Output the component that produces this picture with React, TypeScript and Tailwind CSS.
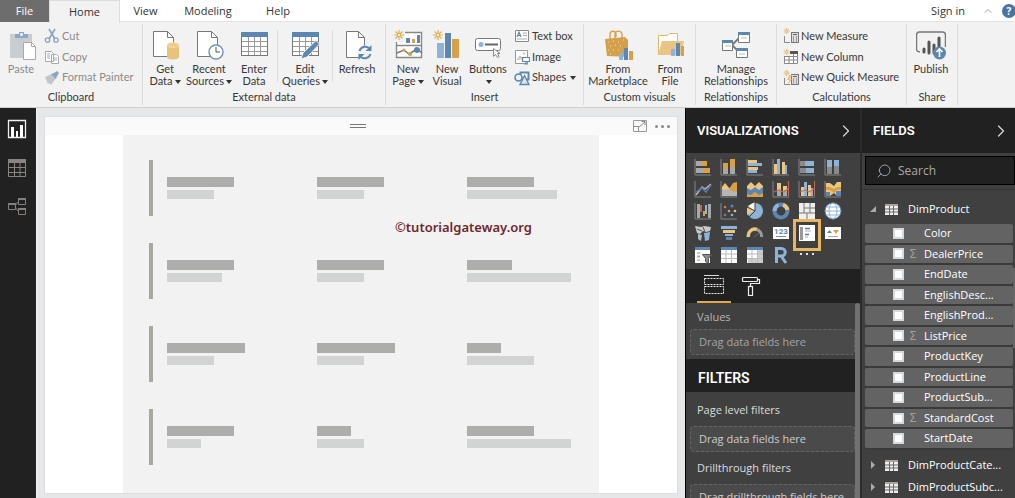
import type { ReactNode } from 'react';
import { ChevronRight, ChevronUp, Search } from 'lucide-react';

const BLUE = '#5b87b2';
const SKY = '#8db4d8';
const GOLD = '#d9a047';
const SAND = '#ecc681';
const GRAY = '#a8a8a8';

type IconProps = { children: ReactNode; size?: string; box?: string };

function Icon({ children, size = 'size-[30px]', box = '0 0 30 30' }: IconProps) {
  return (
    <svg viewBox={box} className={`${size} shrink-0`} fill="none" aria-hidden="true">
      {children}
    </svg>
  );
}

function Small({ children }: { children: ReactNode }) {
  return (
    <Icon size="size-4" box="0 0 16 16">
      {children}
    </Icon>
  );
}

const sheet = (
  <>
    <path d="M5.500 2.500h14l6 6v19h-20z" transform="translate(-2 -1)" fill="#fff" stroke="#777" />
    <path d="M17.500 1.500v6h6" stroke="#777" />
  </>
);

const gridSheet = (
  <>
    <rect x="2.500" y="2.500" width="26" height="23" fill="#fff" stroke="#777" />
    <rect x="2" y="2" width="27" height="5" fill={BLUE} />
    <path d="M3 11.500h25M3 16.500h25M3 21.500h25M9.500 7v18M15.500 7v18M21.500 7v18" stroke="#999" />
  </>
);

const sun = (
  <>
    <path d="M5 0v10M0 5h10M1.500 1.500l7 7M8.500 1.500l-7 7" stroke="#e5ad4c" strokeWidth="1.200" />
    <circle cx="5" cy="5" r="1.800" fill="#fbf3e0" stroke="#e5ad4c" />
  </>
);

const pasteIcon = (
  <Icon>
    <path d="M4 4h22v24H4z" fill="#c9ccd0" />
    <path d="M9 8V4h4V2h5v2h4v4z" fill="#8aa9c8" />
    <circle cx="15.500" cy="4.500" r="1.500" fill="#fff" />
    <path d="M17.500 12.500h8l4 4v13h-12z" fill="#fff" stroke="#aaa" />
    <path d="M25.500 12.500v4h4" stroke="#aaa" />
  </Icon>
);

const getDataIcon = (
  <Icon>
    {sheet}
    <path d="M17 15v12c0 1.500 2.500 2.500 6 2.500s6-1 6-2.500V15z" fill="#e9c27c" />
    <ellipse cx="23" cy="15" rx="6" ry="2.500" fill="#efcb8b" stroke="#f6e3bf" strokeWidth=".7" />
  </Icon>
);

const recentIcon = (
  <Icon>
    {sheet}
    <circle cx="22" cy="22" r="7" fill="#fff" stroke="#7192b0" strokeWidth="1.400" />
    <path d="M22 17v5h4" stroke="#555" />
  </Icon>
);

const editIcon = (
  <Icon>
    {gridSheet}
    <path d="M11 29l2-6L26 10.500l3.500 3.500L17 27z" fill={BLUE} stroke="#f2f2f2" />
  </Icon>
);

const refreshIcon = (
  <Icon>
    <path d="M4.500 1.500h12l6 6v20h-18z" fill="#fff" stroke="#777" />
    <path d="M16.500 1.500v6h6" stroke="#777" />
    <circle cx="23" cy="22.500" r="7" fill="#f2f2f2" />
    <path d="M17.500 21a6 6 0 0 1 10.500-2M28.500 24A6 6 0 0 1 18 26" stroke={BLUE} strokeWidth="2" />
    <path d="M29.500 15v6h-6zM16.500 30v-6h6z" fill={BLUE} />
  </Icon>
);

const newPageIcon = (
  <Icon>
    <path d="M3.500 2.500h25v25h-25zM3.500 15.500h25" fill="#fff" stroke="#888" strokeWidth="1.400" />
    <path d="M13 8h4v5h-4zM24 5h3v8h-3z" fill={BLUE} />
    <path d="M19 9h3v4h-3z" fill={GOLD} />
    <path d="M4 23l7-3 5 4 8-5 5 4" stroke="#777" strokeWidth="1.500" />
    <circle cx="24" cy="20" r="3" fill={BLUE} />
    <circle cx="17" cy="24" r="2" fill={GOLD} />
    <circle cx="11" cy="20" r="1.500" fill={GOLD} />
    <path d="M1 1h11v11H1z" fill="#f2f2f2" />
    <g transform="translate(1 0)">{sun}</g>
  </Icon>
);

const newVisualIcon = (
  <Icon>
    <path d="M5 13h7v15H5z" fill={SKY} />
    <path d="M13 3h6v25h-6z" fill={BLUE} />
    <path d="M20 9h7v19h-7z" fill={GOLD} />
    <g transform="translate(1 0)">{sun}</g>
  </Icon>
);

const buttonsIcon = (
  <Icon>
    <rect x="2.500" y="8.500" width="25" height="12" rx="2" fill="#fff" stroke="#777" />
    <circle cx="8" cy="14.500" r="2.500" fill={SKY} />
    <path d="M12 14.500h13" stroke="#666" strokeWidth="2" />
    <path d="M20.500 18.500v8l2-2 2 3 1.500-1-1.500-3h2.500z" fill="#fff" stroke="#888" />
  </Icon>
);

const marketIcon = (
  <Icon>
    <path d="M7 9V5c0-5 6-5 6 0v2M12 8V4c1-4 7-4 7 1v3" stroke={GOLD} strokeWidth="1.400" />
    <path d="M2 9l20-2 3 3v17L4 26z" fill="#d4a04b" />
    <path d="M5 12h1m4-1h1m4 1h1m4-2h1M7 16h1m4-1h1m4 1h1M5 20h1m4 0h1m4 0h1M7 24h1" stroke="#f5dfb1" />
    <path d="M16 23h4v7h-4z" fill={SKY} />
    <path d="M21 18h4v12h-4z" fill={BLUE} />
    <path d="M26 21h4v9h-4z" fill={GOLD} />
  </Icon>
);

const fileIcon = (
  <Icon>
    <path d="M3.500 25V5.500h9l2-2h8v8" fill="#fff" stroke="#e3b76a" />
    <path d="M3 25l4-14h22l-3 14z" fill="#e8c487" />
    <path d="M16 19h4v7h-4z" fill={SKY} />
    <path d="M21 13h4v13h-4z" fill={BLUE} />
    <path d="M26 16h3v10h-3z" fill={GOLD} />
  </Icon>
);

const manageIcon = (
  <Icon>
    <path d="M11 15l8-8M11 15l8 8" stroke="#777" strokeWidth="1.800" />
    <path d="M1.500 10.500h10v10h-10zM17.500 2.500h11v10h-11zM15.500 18.500h11v9h-11z" fill="#fff" stroke="#777" />
    <path d="M1 10h11v3H1zM17 2h12v3H17zM15 18h12v3H15z" fill={BLUE} />
    <path d="M4 16h6M20 8h6M18 24h6" stroke="#bbb" />
  </Icon>
);

const publishIcon = (
  <Icon>
    <path d="M4 22c-2 0-3.500-1-3.500-3V5c0-2 1-3 3-3h23c2 0 3 1 3 3v12" stroke="#777" strokeWidth="1.500" />
    <path d="M8 19v3M13 12v11M18 15v8M23 8v9" stroke="#555" strokeWidth="3" strokeLinecap="round" />
    <circle cx="23.500" cy="23" r="6.500" fill={BLUE} />
    <path d="M23.500 27v-8M20.500 22l3-3 3 3" stroke="#fff" strokeWidth="1.600" />
  </Icon>
);

const cutIcon = (
  <Small>
    <path d="M5 1l6 10M11 1L5 11" stroke="#8fa9c2" strokeWidth="1.800" />
    <circle cx="3.500" cy="12" r="2.200" stroke="#8aa4be" strokeWidth="1.300" />
    <circle cx="12" cy="12" r="2.200" stroke="#8aa4be" strokeWidth="1.300" />
  </Small>
);

const copyIcon = (
  <Small>
    <path d="M1.500 2.500h6l2 2v8h-8zM7.500 5.500h5l2 2v7h-7z" fill="#fff" stroke="#aaa" />
    <path d="M3 5h3M3 7h3M3 9h3M9 9h4M9 11h4" stroke="#9ab0c5" />
  </Small>
);

const painterIcon = (
  <Small>
    <path d="M1 7l7-3 4 4-5 7-2-2-1 1z" fill="#c3c6ca" />
    <path d="M7 4l3-1 3-2 2 2-2 3-1 3z" fill="#86a6c6" />
  </Small>
);

const textBoxIcon = (
  <Small>
    <path d="M1.500 2.500h13v11h-13z" fill="#fff" stroke="#888" />
    <path d="M3 9l2-5 2 5M4 7.500h2" stroke={BLUE} strokeWidth="1.200" />
    <path d="M9 5h4M9 7.500h4M3 11h10" stroke="#aaa" />
  </Small>
);

const imageIcon = (
  <Small>
    <path d="M1.500 1.500h12v13h-12z" fill="#fff" stroke="#999" />
    <circle cx="10" cy="4.500" r="1.200" fill={SAND} />
    <path d="M3 11l3-4 3 3" fill="#ccc" stroke="#bbb" />
    <path d="M8.500 8.500h7v4h-7zM10 15h4M12 12v3" fill="#fff" stroke={BLUE} strokeWidth="1.200" />
  </Small>
);

const shapesIcon = (
  <Small>
    <path d="M6.500 2.500h8v7h-8z" fill="#fff" stroke={BLUE} strokeWidth="2" />
    <circle cx="4.500" cy="7.500" r="3.500" fill="#f2f2f2" stroke={BLUE} strokeWidth="1.600" />
    <path d="M10.500 5.500l4.500 9H6z" fill="#dbe6f0" stroke={BLUE} strokeWidth="1.400" />
  </Small>
);

const calculator = (
  <>
    <rect x="8.500" y="4.500" width="7" height="10" fill="#ddd" stroke="#777" />
    <path d="M10 6.500h4M10 9h1m2 0h1M10 11h1m2 0h1M10 13h1m2 0h1" stroke="#666" />
    <path d="M1.500 8v6.500H7" stroke="#888" />
  </>
);

const measureIcon = (
  <Small>
    {calculator}
    <g transform="scale(.6) translate(1 0)">{sun}</g>
  </Small>
);

const columnIcon = (
  <Small>
    <path d="M1.500 3.500h13v11h-13zM1.500 7.500h13M1.500 11h13M6 4v10M10.500 4v10" fill="#fff" stroke="#888" />
    <path d="M7 2h8v3H7z" fill="#555" />
    <path d="M0 0h7v7H0z" fill="#f2f2f2" />
    <g transform="scale(.6) translate(1 0)">{sun}</g>
  </Small>
);

const quickIcon = (
  <Small>
    {calculator}
    <g transform="scale(.6) translate(1 0)">{sun}</g>
    <path d="M6 5h3l-2 4h2l-4 6 1-5H4z" fill={SAND} />
  </Small>
);

const axis = <path d="M1 1v16h16" stroke="#858585" />;

const visuals: { name: string; art: ReactNode }[] = [
  { name: 'Stacked bar chart', art: <>{axis}<path d="M2 3h5v5H2zM2 10h7v5H2z" fill={GRAY} /><path d="M7 3h6v5H7zM9 10h7v5H9z" fill={GOLD} /></> },
  { name: 'Stacked column chart', art: <>{axis}<path d="M3 10h5v6H3zM10 8h5v8h-5z" fill={GRAY} /><path d="M3 5h5v6H3zM10 1h5v8h-5z" fill={GOLD} /></> },
  { name: 'Clustered bar chart', art: <>{axis}<path d="M2 2h9v3H2zM2 9h10v3H2z" fill={SAND} /><path d="M2 5h14v3H2zM2 12h9v3H2z" fill={SKY} /></> },
  { name: 'Clustered column chart', art: <>{axis}<path d="M2 6h3v10H2zM10 4h3v12h-3z" fill={SAND} /><path d="M5 1h3v15H5zM13 7h2v9h-2z" fill={SKY} /></> },
  { name: '100% stacked bar chart', art: <>{axis}<path d="M2 3h5v5H2zM2 10h6v5H2z" fill="#8a8a8a" /><path d="M7 3h9v5H7zM8 10h8v5H8z" fill={SKY} /></> },
  { name: '100% stacked column chart', art: <>{axis}<path d="M3 8h5v8H3zM10 7h5v9h-5z" fill="#8a8a8a" /><path d="M3 2h5v7H3zM10 2h5v6h-5z" fill={SKY} /></> },
  { name: 'Line chart', art: <>{axis}<path d="M2 15l6-8 3 2 6-5" stroke="#b5b5b5" strokeWidth="1.500" /><path d="M2 12l6-4 4 4 5-7" stroke="#5a78a8" strokeWidth="1.500" /></> },
  { name: 'Area chart', art: <>{axis}<path d="M2 8l3-3 4 4 4-6 4-1v14H2z" fill={GOLD} /><path d="M2 9l3-4 8 7 4-1v5H2z" fill="#b5b5b5" /><path d="M2 7l3-4 5 6-8 1z" fill={SAND} /></> },
  { name: 'Stacked area chart', art: <><path d="M1 6l4-4 4 4 4-4 4 4v11H1z" fill={SAND} /><path d="M1 8l4 2 4-3 4 3 4-3v10H1z" fill={BLUE} /><path d="M1 14l4 1 4-3 4 3 4-2v4H1z" fill={GOLD} /></> },
  { name: 'Line and stacked column chart', art: <>{axis}<path d="M5 3h4v13H5zM11 6h4v10h-4z" fill={SAND} /><path d="M5 11h4v5H5zM11 11h4v5h-4z" fill={GRAY} /><path d="M2 12l5-2 4 2 5-3M16.500 1v15" stroke="#b96a58" strokeWidth="1.200" /></> },
  { name: 'Line and clustered column chart', art: <>{axis}<path d="M3 7h3v9H3zM10 5h3v11h-3z" fill={SAND} /><path d="M6 2h3v14H6zM13 8h2v8h-2z" fill={SKY} /><path d="M2 12l5-2 4 2 5-3M16.500 1v15" stroke="#b96a58" /></> },
  { name: 'Ribbon chart', art: <>{axis}<path d="M2 3h4l4 3 3-4h4v14h-4l-3-3-4 3H2z" fill={SAND} /><path d="M2 7h4l4 2 3-2h4v3h-4l-3 3-4-3H2z" fill={GOLD} /><path d="M2 12h4v4H2zM12 11h5v5h-5z" fill={BLUE} /></> },
  { name: 'Waterfall chart', art: <>{axis}<path d="M3 2h3v14H3zM14 2h3v14h-3z" fill={GRAY} /><path d="M6 3h2v7H6z" fill="#b96a58" /><path d="M11 3h2v9h-2z" fill={SKY} /><path d="M9 9h2v5H9z" fill={GOLD} /></> },
  { name: 'Scatter chart', art: <>{axis}<circle cx="5" cy="5" r="1.300" fill="#cf7260" /><circle cx="12" cy="4" r="1.500" fill={BLUE} /><circle cx="9" cy="9" r="1.300" fill={GOLD} /><circle cx="15" cy="9" r="1.300" fill={SAND} /><circle cx="5" cy="13" r="1.300" fill={BLUE} /><circle cx="12" cy="13" r="1.300" fill={SKY} /></> },
  { name: 'Pie chart', art: <><circle cx="9" cy="9" r="8" fill={SKY} /><path d="M9 9V0L2 4z" fill="#fff3dc" /><path d="M8 9L1 5v8z" fill={SAND} /><path d="M9 0v9l-6 6M9 9L1 5" stroke="#414141" /></> },
  { name: 'Donut chart', art: <><circle cx="9" cy="9" r="6.500" stroke={BLUE} strokeWidth="4" /><path d="M11 2.800a6.500 6.500 0 0 1 4.500 5" stroke={SAND} strokeWidth="4" /><path d="M2.500 9a6.500 6.500 0 0 1 4-6" stroke={SKY} strokeWidth="4" /></> },
  { name: 'Treemap', art: <><path d="M1 1h16v16H1z" fill="#eee" /><path d="M1 11h16M6 1v10M6 6h11M12 1v10M9 11v6" stroke="#777" /></> },
  { name: 'Map', art: <><circle cx="9" cy="9" r="8" fill="#fff" stroke={BLUE} /><ellipse cx="9" cy="9" rx="4" ry="8" stroke={SKY} /><path d="M1 9h16M2 5h14M2 13h14" stroke={SKY} /></> },
  { name: 'Filled map', art: <><path d="M1 2l6 1 3-1 7 1-1 4-4 1-3-1-3 3-3-1z" fill="#c9c9c9" /><path d="M10 9l6-1-1 8-4 1z" fill={SKY} /><path d="M4 10l4 1-1 6-3-2z" fill="#a8bccb" /><path d="M3 5l5 2M9 3l2 5" stroke="#555" /></> },
  { name: 'Funnel', art: <><path d="M1 2h16v3H1z" fill={SKY} /><path d="M3 6h12v3H3z" fill={SAND} /><path d="M5 10h8v2H5z" fill={SKY} /><path d="M6 13h6v3H6z" fill={BLUE} /></> },
  { name: 'Gauge', art: <><path d="M2.500 13a6.500 6.500 0 0 1 8.500-7.500" stroke={SAND} strokeWidth="3.500" /><path d="M11 5.500a7 7 0 0 1 4.500 7.500" stroke="#9a9a9a" strokeWidth="3" /><path d="M8 13l5-4" stroke="#666" /></> },
  { name: 'Card', art: <><path d="M1 3h16v12H1z" fill="#fff" /><text x="9" y="10" textAnchor="middle" fill={BLUE} className="font-['Roboto'] text-[8px] font-bold">123</text><path d="M4 12.500h10" stroke="#888" /></> },
  { name: 'Multi-row card', art: <><path d="M1 1h16v16H1z" fill="#fff" /><path d="M2 3h3v13H2z" fill="#999" /><path d="M7 4.500h5M7 10.500h4" stroke="#777" strokeWidth="1.500" /><path d="M7 7h6M7 13h3" stroke={SKY} /></> },
  { name: 'KPI', art: <><path d="M1 3h16v12H1z" fill="#fff" /><path d="M3 9l2.500-3L8 9z" fill={BLUE} /><path d="M9 6h6l-3 4z" fill={GOLD} /><path d="M4 12.500h10" stroke="#aaa" /></> },
  { name: 'Slicer', art: <><path d="M1 1h15v16H1z" fill="#fff" /><path d="M1 1h15v3H1z" fill={BLUE} /><path d="M3 6h3v2H3zM3 13h3v2H3z" fill={SAND} /><path d="M3 9.500h3v2H3z" fill={SKY} /><path d="M8.500 8.500h9l-3 4v5l-3-2v-3z" fill="#8c8c8c" stroke="#555" /></> },
  { name: 'Table', art: <><path d="M1 1h16v16H1z" fill="#fff" /><path d="M1 1h16v3H1z" fill={BLUE} /><path d="M1 8h16M1 12.500h16M6 4v13M11.500 4v13" stroke="#bbb" /></> },
  { name: 'Matrix', art: <><path d="M1 1h16v16H1z" fill="#fff" /><path d="M1 1h16v3H1z" fill={BLUE} /><path d="M12 4h5v13h-5zM2 13h15v4H2z" fill="#ccc" /><path d="M1 8h16M1 12.500h16M6 4v13M11.500 4v13" stroke="#bbb" /></> },
  { name: 'R script visual', art: <path d="M4.500 17V2.500h5a3.500 3.500 0 0 1 0 7.500h-5M9 10l5 7" stroke={SKY} strokeWidth="3" /> },
  { name: 'More visuals', art: <path d="M2 8h2M8 8h2M14 8h2" stroke="#e5e5e5" strokeWidth="2" /> },
];

function Caret() {
  return <span className="ml-0.5 inline-block border-x-3 border-t-4 border-x-transparent border-t-[#333] align-middle" />;
}

type BigButtonProps = { icon: ReactNode; top: string; bottom?: string; width: string; menu?: boolean; off?: boolean };

function BigButton({ icon, top, bottom, width, menu, off }: BigButtonProps) {
  return (
    <button className={`flex shrink-0 flex-col items-center pt-1.5 ${width} ${off ? 'text-[#8a8a8a]' : ''}`}>
      {icon}
      <span className="mt-[3px] leading-3 whitespace-nowrap">
        {top}
        <br />
        {bottom}
        {menu && <Caret />}
      </span>
    </button>
  );
}

function SmallButton({ icon, label, menu, off }: { icon: ReactNode; label: string; menu?: boolean; off?: boolean }) {
  return (
    <button className={`flex flex-1 items-center gap-0.5 whitespace-nowrap ${off ? 'text-[#8a8a8a]' : ''}`}>
      {icon}
      {label}
      {menu && <Caret />}
    </button>
  );
}

function Group({ label, width, children }: { label: string; width: string; children: ReactNode }) {
  return (
    <section className={`my-0.5 flex shrink-0 flex-col border-r border-[#dcdcdc] ${width}`}>
      <div className="flex h-[68px] pl-0.5">{children}</div>
      <h2 className="text-center leading-4">{label}</h2>
    </section>
  );
}

function SmallColumn({ children }: { children: ReactNode }) {
  return <div className="mt-0.5 ml-1 flex h-[62px] flex-col">{children}</div>;
}

function Divider() {
  return <div className="mx-0.5 mt-1.5 h-[52px] w-px bg-[#dcdcdc]" />;
}

function Ribbon() {
  return (
    <div className="flex h-[86px] border-b border-[#cfcfcf] bg-[#f2f2f2] font-['Lato','Open_Sans',sans-serif] text-[#383838]">
      <Group label="Clipboard" width="w-[143px]">
        <BigButton icon={pasteIcon} top="Paste" width="w-[38px]" off />
        <SmallColumn>
          <SmallButton icon={cutIcon} label="Cut" off />
          <SmallButton icon={copyIcon} label="Copy" off />
          <SmallButton icon={painterIcon} label="Format Painter" off />
        </SmallColumn>
      </Group>
      <Group label="External data" width="w-[243px]">
        <BigButton icon={getDataIcon} top="Get" bottom="Data" width="w-[40px]" menu />
        <BigButton icon={recentIcon} top="Recent" bottom="Sources" width="w-[48px]" menu />
        <BigButton icon={<Icon>{gridSheet}</Icon>} top="Enter" bottom="Data" width="w-[42px]" />
        <Divider />
        <BigButton icon={editIcon} top="Edit" bottom="Queries" width="w-[50px]" menu />
        <Divider />
        <BigButton icon={refreshIcon} top="Refresh" width="w-[44px]" />
      </Group>
      <Group label="Insert" width="w-[198px]">
        <BigButton icon={newPageIcon} top="New" bottom="Page" width="w-[40px]" menu />
        <BigButton icon={newVisualIcon} top="New" bottom="Visual" width="w-[38px]" />
        <BigButton icon={buttonsIcon} top="Buttons" width="w-[44px]" menu />
        <SmallColumn>
          <SmallButton icon={textBoxIcon} label="Text box" />
          <SmallButton icon={imageIcon} label="Image" />
          <SmallButton icon={shapesIcon} label="Shapes" menu />
        </SmallColumn>
      </Group>
      <Group label="Custom visuals" width="w-[112px]">
        <BigButton icon={marketIcon} top="From" bottom="Marketplace" width="w-[64px]" />
        <BigButton icon={fileIcon} top="From" bottom="File" width="w-[40px]" />
      </Group>
      <Group label="Relationships" width="w-[81px]">
        <BigButton icon={manageIcon} top="Manage" bottom="Relationships" width="w-[76px]" />
      </Group>
      <Group label="Calculations" width="w-[130px]">
        <SmallColumn>
          <SmallButton icon={measureIcon} label="New Measure" />
          <SmallButton icon={columnIcon} label="New Column" />
          <SmallButton icon={quickIcon} label="New Quick Measure" />
        </SmallColumn>
      </Group>
      <Group label="Share" width="w-[51px]">
        <BigButton icon={publishIcon} top="Publish" width="w-[44px]" />
      </Group>
    </div>
  );
}

function Tabs() {
  return (
    <nav className="flex h-[22px] items-stretch bg-white text-[#333]">
      <button className="w-[49px] bg-[#6d6d6d] text-white">File</button>
      <button className="z-10 -mb-px w-[71px] border border-b-0 border-[#dcdcdc] bg-[#f2f2f2]">Home</button>
      <div className="flex flex-1 items-center border-b border-[#e2e2e2] pt-px">
        <button className="w-[51px]">View</button>
        <button className="w-[74px]">Modeling</button>
        <button className="w-[66px]">Help</button>
        <button className="mr-[17px] ml-auto">Sign in</button>
        <button aria-label="Collapse ribbon">
          <ChevronUp className="size-3 text-gray-400" />
        </button>
        <button
          aria-label="Help"
          className="-mr-px ml-2 size-3.5 rounded-full bg-[#4a73a3] text-[10px] leading-none font-bold text-white"
        >
          ?
        </button>
      </div>
    </nav>
  );
}

function Rail() {
  return (
    <nav className="flex w-9 shrink-0 flex-col items-center gap-[19px] bg-[#212121] pt-[11px] pr-0.5">
      <button aria-label="Report">
        <Icon size="size-[20px]" box="0 0 20 20">
          <path d="M1.500 1.500h17v17h-17z" stroke="#eee" strokeWidth="1.300" />
          <path d="M4 8h3v10H4zM9 12h2v6H9zM13 6h3v12h-3z" fill="#fff" />
        </Icon>
      </button>
      <button aria-label="Data">
        <Icon size="size-[20px]" box="0 0 20 20">
          <path d="M1.500 1.500h17v17h-17zM2 9.500h16M2 14.500h16M7.500 5v13M13 5v13" stroke="#8a8582" />
          <path d="M1 1h18v4H1z" fill="#8a8582" />
        </Icon>
      </button>
      <button aria-label="Relationships">
        <Icon size="size-[20px]" box="0 0 20 20">
          <path d="M1.500 6.500h7v6h-7zM11.500 1.500h7v6h-7zM11.500 11.500h7v6h-7zM8 9l3-4M8 10l3 4" stroke="#85807d" />
          <path d="M1 6h8v2H1zM11 1h8v2h-8zM11 11h8v2h-8z" fill="#85807d" />
        </Icon>
      </button>
    </nav>
  );
}

// each card row holds three label / value placeholder pairs
const cardRows = [
  [['w-[67px]', 'w-[47px]'], ['w-[67px]', 'w-[47px]'], ['w-[67px]', 'w-[90px]']],
  [['w-[67px]', 'w-[55px]'], ['w-[67px]', 'w-[47px]'], ['w-[45px]', 'w-[104px]']],
  [['w-[78px]', 'w-[47px]'], ['w-[78px]', 'w-[47px]'], ['w-[34px]', 'w-[67px]']],
  [['w-[67px]', 'w-[34px]'], ['w-[34px]', 'w-[47px]'], ['w-[67px]', 'w-[104px]']],
];

function Canvas() {
  return (
    <main className="flex min-w-0 flex-1 border-l border-[#f5f5f5] bg-[#e5e7e8] px-[7px] pt-2 pb-1">
      <div className="relative flex min-w-0 flex-1 flex-col border border-[#dcdee2] bg-white">
        <div className="flex h-[18px] items-center bg-[#fafafa] pr-[7px]">
          <div className="flex-1" />
          <div className="h-[4px] w-4 border-y border-[#777]" />
          <div className="flex flex-1 items-center justify-end gap-2">
            <button aria-label="Focus mode">
              <Icon size="size-[14px]" box="0 0 14 14">
                <path d="M.5 1.500h13v11H.5z" stroke="#999" />
                <path d="M.5 7.500h5v5M6 8l6-5M8.500 2.500H12V6" stroke="#888" />
              </Icon>
            </button>
            <button aria-label="More options" className="flex gap-[3px]">
              <i className="size-[3px] rounded-full bg-[#888]" />
              <i className="size-[3px] rounded-full bg-[#888]" />
              <i className="size-[3px] rounded-full bg-[#888]" />
            </button>
          </div>
        </div>
        <div className="mx-[78px] flex flex-1 flex-col gap-[27px] bg-[#f2f2f2] pt-[25px] pl-[26px]">
          {cardRows.map((row, i) => (
            <div key={i} className="flex h-14 border-l-4 border-[#aaa6a1] pl-3.5">
              {row.map(([label, value], j) => (
                <div key={j} className="flex w-[150px] shrink-0 flex-col gap-[3px] pt-[17px]">
                  <div className={`h-[10px] bg-[#adadac] ${label}`} />
                  <div className={`h-[9px] bg-[#d2d4d3] ${value}`} />
                </div>
              ))}
            </div>
          ))}
        </div>
        <p className="absolute top-[100px] left-[350px] font-['Noto_Sans',sans-serif] text-[13px] leading-5 font-semibold text-[#70262a]">
          ©tutorialgateway.org
        </p>
      </div>
    </main>
  );
}

function PaneHeader({ title }: { title: string }) {
  return (
    <header className="flex h-[45px] shrink-0 items-center justify-between bg-[#212121] pr-1 pl-[11px]">
      <h2 className="font-['Roboto',sans-serif] text-[13px] font-semibold text-white">{title}</h2>
      <button aria-label={`Collapse ${title.toLowerCase()}`}>
        <ChevronRight className="size-5 text-gray-300" strokeWidth={1.5} />
      </button>
    </header>
  );
}

function DropZone({ children, muted }: { children: ReactNode; muted?: boolean }) {
  return (
    <div
      className={`ml-1 flex h-[26px] shrink-0 items-center rounded-sm border border-dashed border-[#666] bg-[#4a4a4a] pl-2 whitespace-nowrap ${muted ? 'text-[#a5a5a5]' : 'text-[#ccc]'}`}
    >
      {children}
    </div>
  );
}

function Visualizations() {
  return (
    <aside className="flex w-[175px] shrink-0 flex-col overflow-hidden border-l border-black bg-[#404040]">
      <PaneHeader title="VISUALIZATIONS" />
      <div className="grid h-[116px] shrink-0 grid-cols-[repeat(6,26px)] content-start pt-[3px] pl-1">
        {visuals.map(({ name, art }) => (
          <button key={name} aria-label={name} className="relative flex h-[22px] items-center justify-center">
            <Icon size="size-[18px]" box="0 0 18 18">{art}</Icon>
            {name === 'Multi-row card' && (
              <span className="absolute -inset-x-px -top-[3px] -bottom-[7px] border-3 border-[#e9b660]" />
            )}
          </button>
        ))}
      </div>
      <div className="flex h-[34px] shrink-0 bg-[#212121] pl-[11px]">
        <button aria-label="Fields" className="flex w-[34px] items-center justify-center border-b-2 border-[#e0a94a]">
          <Icon size="size-[22px]" box="0 0 22 22">
            <path d="M1 1.500h15" stroke="#ddd" />
            <path d="M1.500 4.500h19v6h-19zM1.500 12.500h19v7h-19z" stroke="#eee" strokeDasharray="2 1" />
          </Icon>
        </button>
        <button aria-label="Format" className="ml-2.5 flex items-center">
          <Icon size="size-[20px]" box="0 0 20 20">
            <rect x="1.500" y="1.500" width="15" height="4" rx="1" stroke="#eee" strokeWidth="1.200" />
            <path d="M16.500 3.500h2v4H9.500v3" stroke="#eee" strokeWidth="1.200" />
            <rect x="7.500" y="10.500" width="4" height="9" stroke="#eee" strokeWidth="1.200" />
          </Icon>
        </button>
      </div>
      <div className="flex min-h-0 flex-1">
        <div className="min-w-0 flex-1">
          <p className="px-[11px] pt-1.5 pb-1 leading-4 text-[#b5b5b5]">Values</p>
          <DropZone muted>Drag data fields here</DropZone>
          <h2 className="mt-1 flex h-[33px] items-center bg-[#212121] pt-1.5 pl-3 font-['Roboto',sans-serif] text-[14px] font-semibold text-white">
            FILTERS
          </h2>
          <p className="px-[11px] pt-2.5 pb-2 leading-4 text-[#ddd]">Page level filters</p>
          <DropZone>Drag data fields here</DropZone>
          <p className="px-[11px] pt-2 pb-2 leading-4 text-[#ddd]">Drillthrough filters</p>
          <DropZone>Drag drillthrough fields here</DropZone>
        </div>
        <div className="w-[5px] shrink-0 rounded-t bg-[#707070]" />
      </div>
    </aside>
  );
}

const fields = [
  { name: 'Color' },
  { name: 'DealerPrice', sum: true },
  { name: 'EndDate' },
  { name: 'EnglishDesc...' },
  { name: 'EnglishProd...' },
  { name: 'ListPrice', sum: true },
  { name: 'ProductKey' },
  { name: 'ProductLine' },
  { name: 'ProductSub...' },
  { name: 'StandardCost', sum: true },
  { name: 'StartDate' },
];

function TableRow({ name, open }: { name: string; open?: boolean }) {
  return (
    <button className="flex h-[22px] w-full shrink-0 items-center pl-[7px] whitespace-nowrap">
      <Icon size="size-[8px]" box="0 0 8 8">
        <path d={open ? 'M7 1v6H1z' : 'M2 0l4 4-4 4z'} fill="#aaa" />
      </Icon>
      <span className="mr-2.5 ml-2">
        <Icon size="size-[13px]" box="0 0 13 13">
          <path d="M0 1h13v11H0z" fill="#eee" />
          <path d="M0 1h13v2H0z" fill="#aaa29c" />
          <path d="M0 6h13M0 9h13M4.500 3v9M8.500 3v9" stroke="#666" />
        </Icon>
      </span>
      {name}
    </button>
  );
}

function Fields() {
  return (
    <aside className="flex w-[155px] shrink-0 flex-col overflow-hidden border-l-2 border-[#2b2b2b] bg-[#404040] text-white">
      <PaneHeader title="FIELDS" />
      <label className="mt-[3px] ml-[3px] flex h-[29px] shrink-0 items-center gap-1.5 border border-black bg-[#212121] pl-2.5">
        <Search className="size-4 shrink-0 -scale-x-100 text-gray-400" strokeWidth={1.5} />
        <input aria-label="Search" placeholder="Search" className="w-full min-w-0 text-[12px] outline-none placeholder:text-[#aaa]" />
      </label>
      <div className="mt-1 flex min-h-0 flex-1 border-t border-[#333]">
        <div className="min-w-0 flex-1 pt-2">
          <TableRow name="DimProduct" open />
          <ul className="mt-1 ml-[3px] grid h-[226px] auto-rows-fr">
            {fields.map(({ name, sum }) => (
              <li key={name} className="border-b-2 border-[#3a3a3a]">
                <label className="flex h-full items-center rounded-xs bg-[#636363] pl-7">
                  <input type="checkbox" className="size-[11px] appearance-none border-2 border-[#d5dade] bg-white checked:bg-[#e0a94a]" />
                  <span className="w-5 pl-[5px] font-['DejaVu_Sans'] text-[12px] text-[#a09c98]">{sum && 'Σ'}</span>
                  {name}
                </label>
              </li>
            ))}
          </ul>
          <div className="mt-1">
            <TableRow name="DimProductCate..." />
            <TableRow name="DimProductSubc..." />
          </div>
        </div>
        <div className="mt-[78px] h-[80px] w-0.5 bg-[#666]" />
      </div>
    </aside>
  );
}

export default function App() {
  return (
    <div className="flex h-screen flex-col overflow-hidden bg-[#f2f2f2] font-['Open_Sans','Noto_Sans',sans-serif] text-[11px] text-[#444]">
      <Tabs />
      <Ribbon />
      <div className="flex min-h-0 flex-1">
        <Rail />
        <Canvas />
        <Visualizations />
        <Fields />
      </div>
    </div>
  );
}
